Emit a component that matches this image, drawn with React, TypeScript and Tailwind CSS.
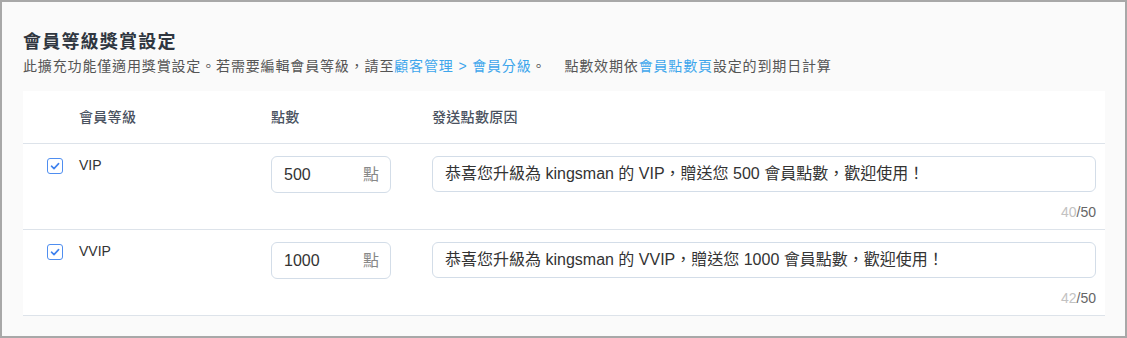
import React from 'react';

const rows = [
  { level: 'VIP', points: '500', reason: '恭喜您升級為 kingsman 的 VIP，贈送您 500 會員點數，歡迎使用！', count: 40 },
  { level: 'VVIP', points: '1000', reason: '恭喜您升級為 kingsman 的 VVIP，贈送您 1000 會員點數，歡迎使用！', count: 42 },
];

const Checkbox = () => (
  <span className="w-4 h-4 mt-[2px] rounded-[3px] border border-[#4f8ef0] bg-white flex items-center justify-center">
    <svg width="10" height="10" viewBox="0 0 10 10" fill="none">
      <polyline points="1.5,5.2 4,7.6 8.6,2.6" stroke="#3f82ee" strokeWidth="1.6" strokeLinecap="round" strokeLinejoin="round" />
    </svg>
  </span>
);

const App = () => {
  return (
    <div
      className="w-[1127px] h-[338px] border-2 border-[#a8a8a8] bg-[#fafafa] pl-[21px] pr-[20px] pt-[27px] text-[#333]"
      style={{ fontFamily: '"Liberation Sans", "Noto Sans CJK TC", sans-serif' }}
    >
      {/* Heading */}
      <h2 className="text-[18px] leading-[26px] font-bold text-[#2f3640] tracking-[1.2px]">會員等級獎賞設定</h2>
      <p className="text-[14px] leading-[22px] text-[#555] tracking-[0.85px]">
        此擴充功能僅適用獎賞設定。若需要編輯會員等級，請至
        <a href="#" className="text-[#3ea6ec]">顧客管理 &gt; 會員分級</a>
        。
        <span className="ml-[18px]">點數效期依</span>
        <a href="#" className="text-[#3ea6ec]">會員點數頁</a>
        設定的到期日計算
      </p>

      {/* Table */}
      <div className="mt-[14px] bg-white">
        <div className="grid grid-cols-[32px_192px_161px_1fr] h-[53px] items-center pl-[24px] pr-[9px] border-b border-[#dde3ea] text-[14px] font-medium text-[#4a5260] tracking-[0.3px]">
          <span />
          <span>會員等級</span>
          <span>點數</span>
          <span>發送點數原因</span>
        </div>

        {rows.map((r) => (
          <div
            key={r.level}
            className="grid grid-cols-[16px_16px_192px_161px_1fr] items-start pl-[24px] pr-[9px] pt-[12px] pb-[8px] border-b border-[#dde3ea]"
          >
            <Checkbox />
            <span />
            <span className="text-[14px] leading-[20px] mt-[-1px] text-[#333]">{r.level}</span>
            <div className="w-[120px] h-[37px] rounded-[6px] border border-[#d3dde8] flex items-center justify-between pl-[12px] pr-[11px]">
              <span className="text-[16px] text-[#333]">{r.points}</span>
              <span className="text-[16px] text-[#888]">點</span>
            </div>
            <div className="flex flex-col">
              <div className="h-[36px] rounded-[6px] border border-[#d3dde8] flex items-center px-[12px] text-[16px] text-[#333]">
                {r.reason}
              </div>
              <div className="mt-[11px] text-right text-[14px] leading-[18px]">
                <span className="text-[#c2c2c2]">{r.count}</span>
                <span className="text-[#666]">/50</span>
              </div>
            </div>
          </div>
        ))}
      </div>
    </div>
  );
};

export default App;
